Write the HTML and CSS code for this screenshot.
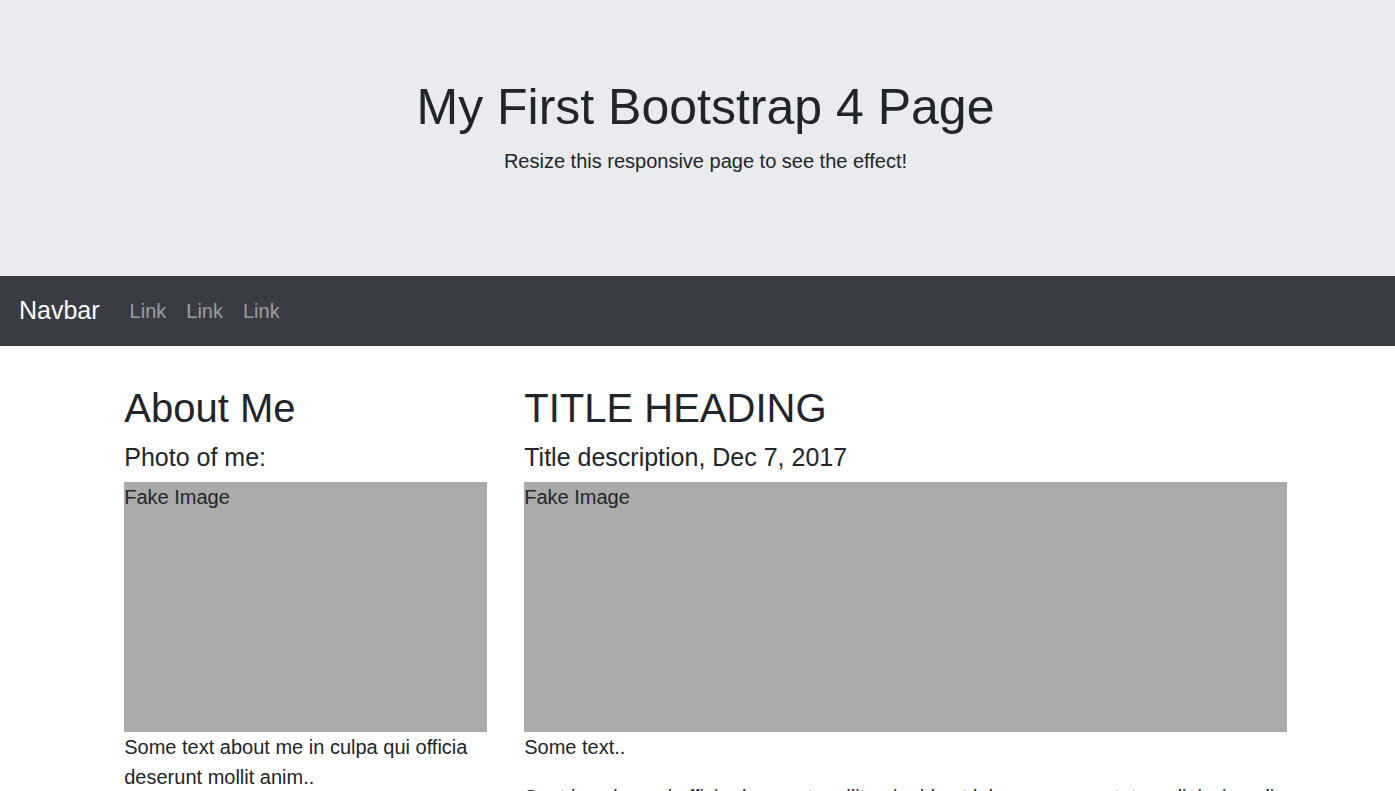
FILE: index.html
```html
<!DOCTYPE html>
<html lang="en">
<head>
<meta charset="utf-8">
<title>Bootstrap 4 Page</title>
<link rel="stylesheet" href="styles.css">
</head>
<body>
<div class="jumbotron">
  <h1 class="jumbo-title">My First Bootstrap 4 Page</h1>
  <p class="jumbo-lead">Resize this responsive page to see the effect!</p>
</div>
<nav class="navbar">
  <a class="navbar-brand" href="#">Navbar</a>
  <ul class="nav-list">
    <li><a class="nav-link" href="#">Link</a></li>
    <li><a class="nav-link" href="#">Link</a></li>
    <li><a class="nav-link" href="#">Link</a></li>
  </ul>
</nav>
<div class="container">
  <div class="row">
    <div class="col col-4">
      <h2 class="heading">About Me</h2>
      <h5 class="subheading">Photo of me:</h5>
      <div class="fakeimg">Fake Image</div>
      <p class="text">Some text about me in culpa qui officia deserunt mollit anim..</p>
    </div>
    <div class="col col-8">
      <h2 class="heading">TITLE HEADING</h2>
      <h5 class="subheading">Title description, Dec 7, 2017</h5>
      <div class="fakeimg">Fake Image</div>
      <p class="text">Some text..</p>
      <p class="text">Sunt in culpa qui officia deserunt mollit anim id est laborum consectetur adipiscing elit, sed do eiusmod tempor incididunt ut labore et dolore magna aliqua. Ut enim ad minim veniam, quis nostrud exercitation ullamco.</p>
    </div>
  </div>
</div>
</body>
</html>
```
FILE: styles.css
```css
* { box-sizing: border-box; }
html, body { margin: 0; padding: 0; }
body {
  font-family: "Liberation Sans", Arial, Helvetica, sans-serif;
  font-size: 20px;
  line-height: 1.5;
  color: #212529;
  background: #fff;
  overflow: hidden;
}
.jumbotron {
  background: #e9ebef;
  padding: 80px 40px 80px 56px;
  text-align: center;
}
.jumbo-title {
  margin: 0 0 11px;
  font-size: 50px;
  font-weight: 400;
  line-height: 1.1;
}
.jumbo-lead {
  margin: 0 0 20px;
  font-size: 20px;
  line-height: 30px;
}
.navbar {
  display: flex;
  align-items: center;
  height: 70px;
  padding: 10px 20px 10px 19px;
  background: #393b45;
}
.navbar-brand {
  color: #fff;
  font-size: 25px;
  line-height: 37.5px;
  padding: 6.25px 0;
  margin-right: 20px;
  text-decoration: none;
}
.nav-list {
  display: flex;
  list-style: none;
  margin: 0;
  padding: 0;
}
.nav-link {
  display: block;
  padding: 10px 10px;
  color: rgba(255, 255, 255, 0.5);
  text-decoration: none;
  line-height: 30px;
}
.container {
  width: 1200px;
  margin-left: calc(50% - 592px);
  margin-top: 37.5px;
}
.row { display: flex; }
.col { padding: 0 18.75px; }
.col-4 { width: 400px; }
.col-8 { width: 800px; }
.heading {
  margin: 0 0 10px;
  font-size: 40px;
  font-weight: 400;
  line-height: 1.2;
}
.subheading {
  margin: 0 0 10px;
  font-size: 25px;
  font-weight: 400;
  line-height: 1.2;
}
.fakeimg {
  height: 250px;
  background: #aaa;
  line-height: 30px;
}
.text {
  margin: 0 0 20px;
  line-height: 30px;
}
```
